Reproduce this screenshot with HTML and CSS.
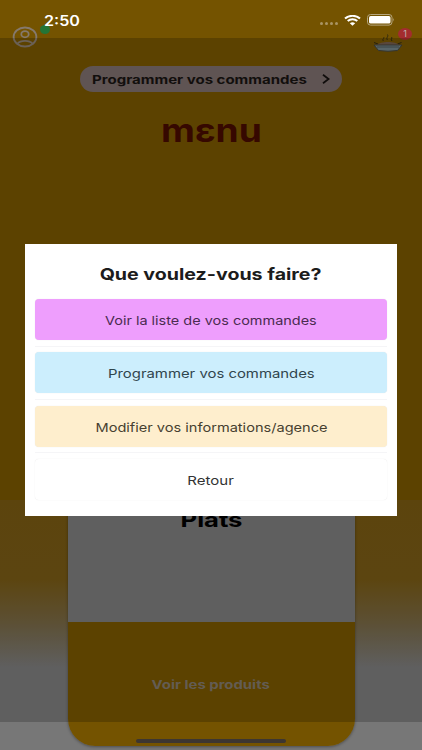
FILE: index.html
```
<!DOCTYPE html>
<html lang="fr">
<head>
  <meta charset="UTF-8" />
  <meta name="viewport" content="width=device-width, initial-scale=1" />
  <title>Menu</title>
  <link rel="stylesheet" href="styles.css">
</head>
<body>
  <div class="screen">
    <header class="topbar">
      <div class="profile">
        <svg width="26" height="22" viewBox="0 0 26 22" fill="none" stroke="#85796c" stroke-width="1.8">
          <ellipse cx="13" cy="11" rx="11.4" ry="9.5" />
          <ellipse cx="13" cy="8.2" rx="3.7" ry="3.1" />
          <path d="M5.2 17.8c1.8-2 4.5-2.9 7.8-2.9s6 .9 7.8 2.9" />
        </svg>
        <span class="online"></span>
      </div>
      <div class="cart">
        <svg width="30" height="20" viewBox="0 0 30 20">
          <g fill="none" stroke="#302911" stroke-width="1">
            <path d="M10.5 8c-2-2 1.5-2.500 0-4M14.500 7c-2-2.200 1.300-3.200 0-5.500M19 8c-2-2 1-2.500-.5-4" />
            <path d="M1 9.500l4 1.500M28.500 9.500l-4 1.500" />
          </g>
          <path d="M4 12c3-4 19-4 22 0z" fill="#70594a" />
          <path d="M1 12h28l-4.500 5.500q-9.500 1.500-19 0z" fill="#6f7f83" stroke="#40413a" stroke-width="1" />
          <path d="M4 14h22" stroke="#4a5455" />
        </svg>
        <span class="badge">1</span>
      </div>
    </header>

    <div class="program">
      <span class="program-text">Programmer vos commandes</span>
      <svg width="8" height="10" viewBox="0 0 8 10" fill="none" stroke="#15110f" stroke-width="1.8">
        <path d="M1 .8L6.600 5L1 9.200" />
      </svg>
    </div>

    <h1 class="brand"><span>mεnu</span></h1>

    <main class="card">
      <div class="card-body"><h2>Plats</h2></div>
      <div class="card-footer"><span>Voir les produits</span></div>
    </main>
  </div>

  <div class="shade"></div>

  <div class="status">
    <span class="time">2:50</span>
    <div class="status-icons">
      <div class="signal"><i></i><i></i><i></i><i></i></div>
      <svg width="17" height="11" viewBox="0 0 17 11" fill="none" stroke="#fff" stroke-width="2">
        <path d="M1 3.600C5-.1 12-.1 16 3.600M3.700 6.100c2.700-2.400 6.900-2.400 9.600 0" />
        <path d="M5.800 8.200Q8.500 6.200 11.200 8.200L8.500 10.700z" fill="#fff" stroke="none" />
      </svg>
      <svg class="battery" width="28" height="12" viewBox="0 0 28 12">
        <rect x=".5" y=".5" width="24.500" height="10.600" rx="3" fill="none" stroke="#b5a67f" />
        <rect x="2" y="2" width="21.500" height="7.600" rx="1.700" fill="#fff" />
        <path d="M26 4q1.500 1.800 0 3.600z" fill="#b5a67f" />
      </svg>
    </div>
  </div>

  <div class="home-bar"></div>

  <div class="modal">
    <div class="modal-content">
      <h3><span>Que voulez-vous faire?</span></h3>
      <button class="btn pink"><span class="t-list">Voir la liste de vos commandes</span></button>
      <hr>
      <button class="btn blue"><span class="t-prog">Programmer vos commandes</span></button>
      <hr>
      <button class="btn cream"><span class="t-edit">Modifier vos informations/agence</span></button>
      <hr>
      <button class="btn white"><span class="t-back">Retour</span></button>
    </div>
  </div>
</body>
</html>
```
FILE: styles.css
```
* {
  margin: 0; padding: 0; box-sizing: border-box;
  font-family: Inter, "Open Sans", sans-serif;
}
body {
  width: 422px;
  height: 750px;
  overflow: hidden;
  position: relative;
}
.screen {
  height: 750px;
  padding-top: 26px;
  display: flex;
  flex-direction: column;
  align-items: center;
  background: linear-gradient(#745300 0, #745300 500px, #735611 500px, #735715 580px, #73633f 620px, #777 667px);
}
span {
  display: inline-block;
  white-space: nowrap;
}
.topbar {
  width: 100%;
  height: 40px;
  display: flex;
  justify-content: space-between;
  padding: 0 9px 0 12px;
}
.profile, .cart {
  position: relative;
}
.cart {
  width: 40px;
  padding-top: 7px;
}
.online {
  position: absolute;
  left: 28px;
  top: -1px;
  width: 10px;
  height: 9px;
  border-radius: 50%;
  background: #237536;
}
.badge {
  position: absolute;
  right: 1px;
  top: 2px;
  width: 14px;
  height: 12px;
  border-radius: 50%;
  background: #a32c2e;
  color: #bdb3af;
  font-size: 9px;
  line-height: 12px;
  text-align: center;
}
.program {
  width: 262px;
  height: 26px;
  flex: none;
  border-radius: 13px;
  background: #776968;
  color: #171311;
  display: flex;
  align-items: center;
  justify-content: space-between;
  padding: 0 12px;
}
.program-text {
  font-size: 12px;
  font-weight: 700;
  transform: scaleX(1.25);
  transform-origin: left;
}
.brand {
  height: 60px;
  margin-top: 9px;
  font-size: 32px;
  line-height: 60px;
  font-weight: 700;
  color: #440b00;
}
.brand span {
  transform: scaleX(1.16);
}
.card {
  width: 287px;
  height: 286px;
  flex: none;
  margin-top: 299px;
  border-radius: 0 0 27px 27px;
  overflow: hidden;
  box-shadow: 0 1px 3px rgba(0, 0, 0, .35);
}
.card-body {
  height: 162px;
  padding-top: 46px;
  background: #777;
  text-align: center;
}
.card-body h2 {
  font-size: 20px;
  line-height: 29px;
  transform: scaleX(1.28);
  color: #000;
}
.card-footer {
  height: 124px;
  background: #745300;
  color: #7c7468;
  font-size: 12px;
  font-weight: 700;
  line-height: 126px;
  text-align: center;
}
.card-footer span {
  transform: scaleX(1.24);
}

/* darker area between the safe insets */
.shade {
  position: absolute;
  left: 0; right: 0;
  top: 38px; bottom: 28px;
  background: rgba(0, 0, 0, .2);
}

.status {
  position: absolute;
  top: 12px;
  left: 44px;
  right: 27px;
  height: 16px;
  display: flex;
  align-items: center;
  justify-content: space-between;
  color: #fff;
}
.time {
  font-size: 14px;
  font-weight: 600;
  transform: scaleX(1.15);
  transform-origin: left;
}
.status-icons {
  display: flex;
  align-items: center;
  gap: 6px;
}
.signal {
  display: flex;
  gap: 2px;
  padding-top: 7px;
}
.signal i {
  width: 3px;
  height: 3px;
  border-radius: 50%;
  background: #aa9564;
}
.home-bar {
  position: absolute;
  left: 136px;
  top: 739px;
  width: 150px;
  height: 4px;
  border-radius: 2px;
  background: #3c3631;
}

.modal {
  position: absolute;
  inset: 0;
  padding: 244px 25px 0;
}
.modal-content {
  height: 272px;
  padding: 9px 10px 0;
  background: #fff;
}
.modal-content h3 {
  height: 46px;
  line-height: 42px;
  font-size: 16px;
  font-weight: 700;
  color: #1c1c1c;
  text-align: center;
}
.modal-content h3 span {
  transform: scaleX(1.225);
}
.btn {
  display: block;
  width: 100%;
  height: 41px;
  padding-top: 2px;
  border: none;
  border-radius: 4px;
  font-size: 12px;
  color: #333;
  box-shadow: 0 0 1px rgba(0, 0, 0, .12);
}
.t-list { transform: scaleX(1.205); }
.t-prog { transform: scaleX(1.24); }
.t-edit { transform: scaleX(1.215); }
.t-back { transform: scaleX(1.25); }

.modal-content hr {
  height: 1px;
  border: none;
  background: #f5f5f7;
  margin: 5.7px 0;
}
.pink { background: #ee9efd; color: #4a2b50; }
.blue { background: #cceefd; color: #30454d; }
.cream { background: #feeecd; color: #463f30; }
.white { background: #fff; }
```
